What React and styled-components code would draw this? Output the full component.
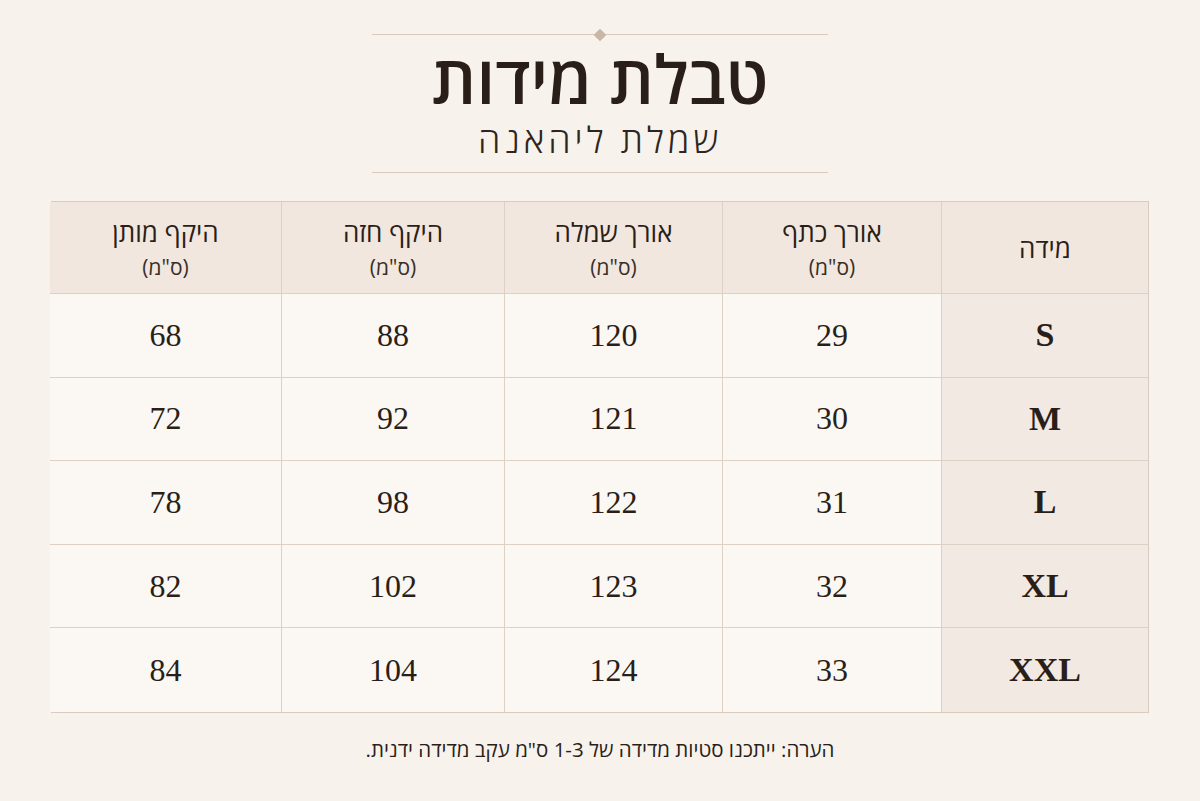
import React from 'react';
import styled, {createGlobalStyle} from 'styled-components';

const GlobalStyle = createGlobalStyle`
  html, body {
    margin: 0;
    padding: 0;
    background: #f8f2ed;
  }
  body {
    font-family: "Open Sans", "Noto Sans", "DejaVu Sans", sans-serif;
    color: #2a1f18;
  }
`;

const Page = styled.div`
  width: 1200px;
  height: 801px;
  box-sizing: border-box;
  padding-top: 34px;
  display: flex;
  flex-direction: column;
  align-items: center;
  background: #f8f2ed;
  direction: rtl;
`;

const Rule = styled.div`
  position: relative;
  width: 456px;
  height: 1px;
  background: #d8cabd;
`;

const Diamond = styled.span`
  position: absolute;
  left: 50%;
  top: 50%;
  width: 9px;
  height: 9px;
  background: #c9b6a4;
  transform: translate(-50%, -50%) rotate(45deg);
`;

const Title = styled.h1`
  margin: 5px 0 0;
  font-size: 67px;
  font-weight: 600;
  line-height: 76px;
  color: #2a1f18;
`;

const Subtitle = styled.h2`
  margin: 0 0 8px;
  font-size: 36px;
  font-weight: 300;
  letter-spacing: 4px;
  line-height: 48px;
  color: #2e2520;
`;

const Table = styled.div`
  margin-top: 28px;
  width: 1098px;
  display: grid;
  grid-template-columns: 207px 219px 218px 223px 231px;
  grid-template-rows: 92px repeat(5, 83.6px);
  border: 1px solid #d9cbbf;
  box-sizing: border-box;
`;

const Cell = styled.div`
  display: flex;
  flex-direction: column;
  align-items: center;
  justify-content: center;
  border-left: 1px solid #ddd0c5;
  border-bottom: 1px solid #ddd0c5;
  background: ${p => (p.$head ? '#f1e7df' : p.$size ? '#f2e9e2' : '#fbf7f3')};
  &:nth-child(5n) {
    border-left: none;
  }
  &:nth-last-child(-n + 5) {
    border-bottom: none;
  }
`;

const HeadLabel = styled.span`
  font-size: 26px;
  line-height: 32px;
  color: #2a1f18;
`;

const HeadUnit = styled.span`
  font-size: 21px;
  line-height: 26px;
  margin-top: 6px;
  color: #3a2f28;
`;

const Size = styled.span`
  font-family: "Liberation Serif", "Times New Roman", serif;
  font-weight: 700;
  font-size: 34px;
  color: #2a1f18;
`;

const Value = styled.span`
  font-family: "Liberation Serif", "Times New Roman", serif;
  font-size: 32px;
  color: #2a1f18;
`;

const Note = styled.p`
  margin: 22px 0 0;
  font-size: 20.5px;
  color: #2a1f18;
`;

const columns = ['אורך כתף', 'אורך שמלה', 'היקף חזה', 'היקף מותן'];

const rows = [
  {size: 'S', values: [29, 120, 88, 68]},
  {size: 'M', values: [30, 121, 92, 72]},
  {size: 'L', values: [31, 122, 98, 78]},
  {size: 'XL', values: [32, 123, 102, 82]},
  {size: 'XXL', values: [33, 124, 104, 84]},
];

const App = () => {
  return (
    <Page>
      <GlobalStyle />
      <Rule><Diamond /></Rule>
      <Title>טבלת מידות</Title>
      <Subtitle>שמלת ליהאנה</Subtitle>
      <Rule />

      <Table>
        <Cell $head>
          <HeadLabel>מידה</HeadLabel>
        </Cell>
        {columns.map(c => (
          <Cell $head key={c}>
            <HeadLabel>{c}</HeadLabel>
            <HeadUnit>(ס"מ)</HeadUnit>
          </Cell>
        ))}

        {rows.map(r => (
          <React.Fragment key={r.size}>
            <Cell $size>
              <Size>{r.size}</Size>
            </Cell>
            {r.values.map((v, i) => (
              <Cell key={i}>
                <Value>{v}</Value>
              </Cell>
            ))}
          </React.Fragment>
        ))}
      </Table>

      <Note>הערה: ייתכנו סטיות מדידה של 1-3 ס"מ עקב מדידה ידנית.</Note>
    </Page>
  );
};

export default App;
